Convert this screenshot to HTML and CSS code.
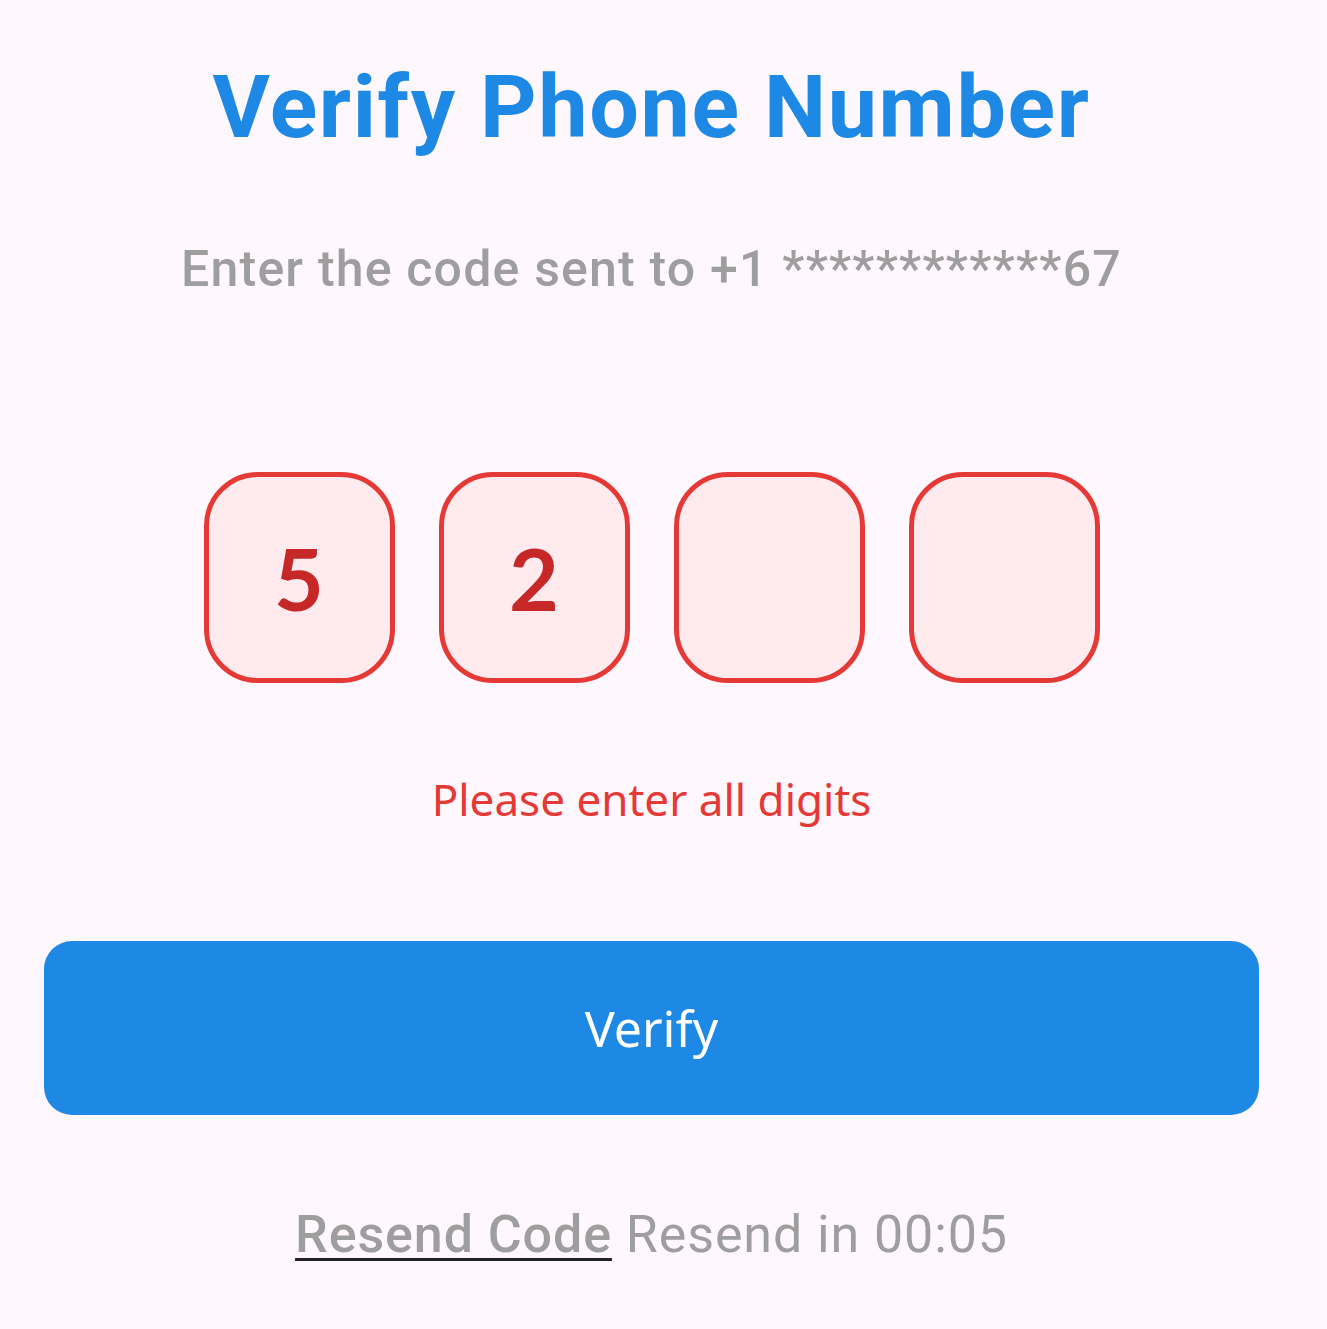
FILE: index.html
```html
<!DOCTYPE html>
<html lang="en">
<head>
<meta charset="utf-8">
<title>Verify Phone Number</title>
<link rel="stylesheet" href="styles.css">
</head>
<body>
<main class="screen">
  <h1 class="title">Verify Phone Number</h1>
  <p class="subtitle">Enter the code sent to +1 ************67</p>
  <div class="otp">
    <div class="otp-box">5</div>
    <div class="otp-box">2</div>
    <div class="otp-box"></div>
    <div class="otp-box"></div>
  </div>
  <p class="error">Please enter all digits</p>
  <button class="verify-btn" type="button">Verify</button>
  <p class="resend"><span class="resend-link">Resend Code</span> Resend in 00:05</p>
</main>
</body>
</html>
```
FILE: styles.css
```css
html, body {
  margin: 0;
  padding: 0;
  background: #fef7fe;
}
.screen {
  display: flex;
  flex-direction: column;
  align-items: center;
  padding: 0 68px 0 44px;
  min-height: 1329px;
  box-sizing: border-box;
}
.title {
  margin: 52px 0 0;
  font-family: Roboto, sans-serif;
  font-weight: 700;
  font-size: 88px;
  line-height: 110px;
  letter-spacing: 1.6px;
  color: #1e88e5;
}
.subtitle {
  margin: 77px 0 0;
  font-family: Roboto, sans-serif;
  font-weight: 500;
  font-size: 50px;
  line-height: 60px;
  letter-spacing: 1.2px;
  color: #9e9e9e;
}
.otp {
  display: flex;
  gap: 44px;
  margin-top: 173px;
}
.otp-box {
  width: 191px;
  height: 211px;
  box-sizing: border-box;
  border: 5px solid #e53935;
  border-radius: 54px;
  background: #ffebee;
  display: flex;
  align-items: center;
  justify-content: center;
  font-family: Lato, sans-serif;
  font-weight: 700;
  font-size: 86px;
  color: #c62828;
}
.error {
  margin: 88px 0 0;
  font-family: "Noto Sans", sans-serif;
  font-size: 44px;
  line-height: 56px;
  color: #e53935;
}
.verify-btn {
  align-self: stretch;
  margin-top: 114px;
  height: 174px;
  border: none;
  border-radius: 28px;
  background: #1e88e5;
  color: #ffffff;
  font-family: "Noto Sans", sans-serif;
  font-size: 50px;
}
.resend {
  margin: 88px 0 0;
  font-family: Roboto, sans-serif;
  font-weight: 400;
  font-size: 52px;
  line-height: 64px;
  color: #9e9e9e;
  letter-spacing: 0.9px;
}
.resend-link {
  font-weight: 500;
  text-decoration: underline;
  text-decoration-color: #222;
  text-decoration-thickness: 3px;
  text-underline-offset: 6px;
}
```
